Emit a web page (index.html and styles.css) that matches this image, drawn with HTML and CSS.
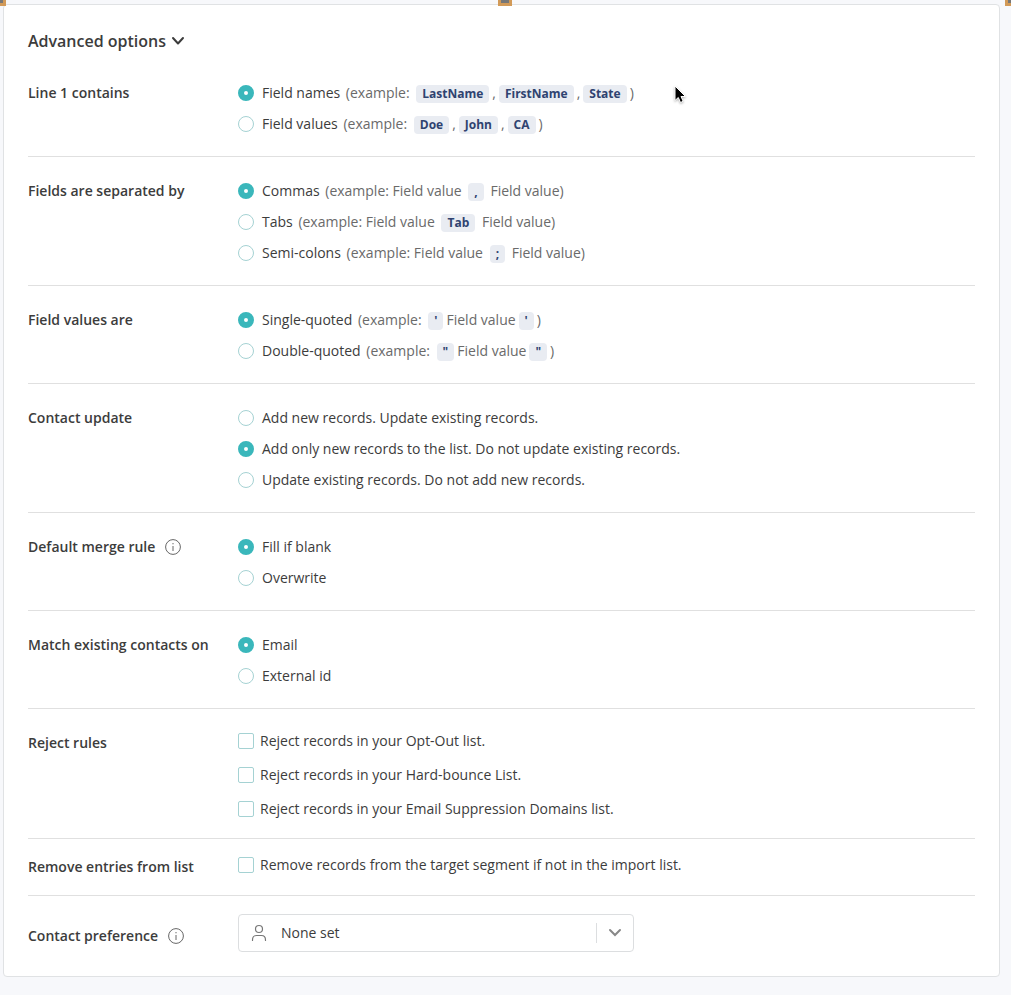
FILE: index.html
```html
<!DOCTYPE html>
<html lang="en">
<head>
  <meta charset="UTF-8">
  <meta name="viewport" content="width=device-width, initial-scale=1">
  <title>Import - Advanced options</title>
  <link rel="stylesheet" href="styles.css">
</head>
<body>

  <!-- Selection handles -->
  <span class="handle handle-left"></span>
  <span class="handle handle-center"></span>
  <span class="handle handle-right"></span>

  <form class="card">
    <button type="button" class="toggle" aria-expanded="true">
      Advanced options
      <svg width="14" height="10" viewBox="0 0 14 10" fill="none" stroke="#3c3c3c" stroke-width="2" stroke-linecap="round" stroke-linejoin="round"><path d="M2 2l5 5.500 5-5.500"/></svg>
    </button>

    <div class="row" role="radiogroup" aria-labelledby="lineTitle">
      <div class="title" id="lineTitle">Line 1 contains</div>
      <div class="options">
        <label class="option"><input type="radio" name="line" checked><span>Field names <span class="example">(example: <b class="chip">LastName</b>,<b class="chip">FirstName</b>,<b class="chip">State</b>)</span></span></label>
        <label class="option"><input type="radio" name="line"><span>Field values <span class="example">(example: <b class="chip">Doe</b>,<b class="chip">John</b>,<b class="chip">CA</b>)</span></span></label>
      </div>
    </div>

    <div class="row" role="radiogroup" aria-labelledby="separatorTitle">
      <div class="title" id="separatorTitle">Fields are separated by</div>
      <div class="options">
        <label class="option"><input type="radio" name="separator" checked><span>Commas <span class="example">(example: Field value <b class="chip">,</b> Field value)</span></span></label>
        <label class="option"><input type="radio" name="separator"><span>Tabs <span class="example">(example: Field value <b class="chip">Tab</b> Field value)</span></span></label>
        <label class="option"><input type="radio" name="separator"><span>Semi-colons <span class="example">(example: Field value <b class="chip">;</b> Field value)</span></span></label>
      </div>
    </div>

    <div class="row" role="radiogroup" aria-labelledby="quoteTitle">
      <div class="title" id="quoteTitle">Field values are</div>
      <div class="options">
        <label class="option"><input type="radio" name="quote" checked><span>Single-quoted <span class="example">(example: <b class="chip">'</b>Field value<b class="chip">'</b>)</span></span></label>
        <label class="option"><input type="radio" name="quote"><span>Double-quoted <span class="example">(example: <b class="chip">"</b>Field value<b class="chip">"</b>)</span></span></label>
      </div>
    </div>

    <div class="row" role="radiogroup" aria-labelledby="updateTitle">
      <div class="title" id="updateTitle">Contact update</div>
      <div class="options">
        <label class="option"><input type="radio" name="update"><span>Add new records. Update existing records.</span></label>
        <label class="option"><input type="radio" name="update" checked><span>Add only new records to the list. Do not update existing records.</span></label>
        <label class="option"><input type="radio" name="update"><span>Update existing records. Do not add new records.</span></label>
      </div>
    </div>

    <div class="row" role="radiogroup" aria-labelledby="mergeTitle">
      <div class="title" id="mergeTitle">
        Default merge rule
        <svg class="info" width="16" height="16" viewBox="0 0 16 16" fill="none" stroke="#666" stroke-width="1"><circle cx="8" cy="8" r="7.400"/><path d="M8 7v5M8 4v1.300"/></svg>
      </div>
      <div class="options">
        <label class="option"><input type="radio" name="merge" checked><span>Fill if blank</span></label>
        <label class="option"><input type="radio" name="merge"><span>Overwrite</span></label>
      </div>
    </div>

    <div class="row" role="radiogroup" aria-labelledby="matchTitle">
      <div class="title" id="matchTitle">Match existing contacts on</div>
      <div class="options">
        <label class="option"><input type="radio" name="match" checked><span>Email</span></label>
        <label class="option"><input type="radio" name="match"><span>External id</span></label>
      </div>
    </div>

    <div class="row row-checks" role="group" aria-labelledby="rejectTitle">
      <div class="title" id="rejectTitle">Reject rules</div>
      <div class="options">
        <label class="option check"><input type="checkbox"><span>Reject records in your Opt-Out list.</span></label>
        <label class="option check"><input type="checkbox"><span>Reject records in your Hard-bounce List.</span></label>
        <label class="option check"><input type="checkbox"><span>Reject records in your Email Suppression Domains list.</span></label>
      </div>
    </div>

    <div class="row row-remove" role="group" aria-labelledby="removeTitle">
      <div class="title" id="removeTitle">Remove entries from list</div>
      <div class="options">
        <label class="option check"><input type="checkbox"><span>Remove records from the target segment if not in the import list.</span></label>
      </div>
    </div>

    <div class="row row-preference">
      <label class="title" for="preference">
        Contact preference
        <svg class="info" width="16" height="16" viewBox="0 0 16 16" fill="none" stroke="#666" stroke-width="1"><circle cx="8" cy="8" r="7.400"/><path d="M8 7v5M8 4v1.300"/></svg>
      </label>
      <div class="select">
        <svg class="person" width="16" height="18" viewBox="0 0 16 18" fill="none" stroke="#777" stroke-width="1.200" stroke-linecap="round"><circle cx="8" cy="5" r="3.500"/><path d="M1.500 16.500v-.500c0-3 1.500-4.500 4-4.500h5c2.500 0 4 1.500 4 4.500v.500"/></svg>
        <select id="preference">
          <option>None set</option>
        </select>
        <span class="arrow"><svg width="14" height="10" viewBox="0 0 14 10" fill="none" stroke="#888" stroke-width="2" stroke-linecap="round"><path d="M2 2l5 5 5-5"/></svg></span>
      </div>
    </div>
  </form>

  <!-- Mouse pointer -->
  <svg class="pointer" width="14" height="20" viewBox="0 0 14 20"><path d="M2 1v14.500l3.300-3 2.200 5 2.700-1.200-2.200-4.800h4.500z" fill="#000" stroke="#fff" stroke-width="1"/></svg>

</body>
</html>
```
FILE: styles.css
```css
* {
  box-sizing: border-box;
}

body {
  margin: 0;
  padding: 4px 11px 18px 3px;
  min-height: 100vh;
  position: relative;
  overflow-x: hidden;
  background: #f7f8fb;
  color: #3c3c3c;
  font-family: "Open Sans", "Noto Sans", sans-serif;
  font-size: 14px;
  line-height: 20px;
}

.card {
  padding: 24px;
  background: #fff;
  border: 1px solid #e0e2e4;
  border-radius: 4px;
}

.toggle {
  display: flex;
  align-items: center;
  gap: 5px;
  padding: 0;
  margin-bottom: 6px;
  border: none;
  background: none;
  color: inherit;
  font: 600 16px/24px "Open Sans", "Noto Sans", sans-serif;
  cursor: pointer;
}

.row {
  display: grid;
  grid-template-columns: 210px 1fr;
  padding: 18px 0 17px;
  border-bottom: 1px solid #e0e0e0;
}

.title {
  display: flex;
  align-items: center;
  align-self: start;
  gap: 10px;
  height: 31px;
  font-weight: 600;
}

.option {
  display: flex;
  align-items: center;
  gap: 8px;
  min-height: 31px;
}

.option input {
  appearance: none;
  flex: none;
  width: 16px;
  height: 16px;
  margin: 0;
  border: 1px solid #a5d2d3;
  border-radius: 50%;
  background: #fff;
}

.option input[type="radio"]:checked {
  border: 6px solid #3ab7bb;
}

.example {
  margin-left: 2px;
  color: #6a6a6a;
}

.chip {
  display: inline-block;
  margin: 0 3px;
  padding: 0 6px;
  border-radius: 4px;
  background: #e9ecf2;
  color: #2f4370;
  font-size: 12px;
  line-height: 18px;
}

.check {
  gap: 6px;
  min-height: 34px;
}

.option input[type="checkbox"] {
  border-radius: 2px;
}

.option input[type="checkbox"]:checked {
  background: #3ab7bb;
}

.row-checks {
  padding: 15px 0 12px;
}

.row-checks .title {
  height: 38px;
}

.row-remove {
  padding: 9px 0;
}

.row-remove .title {
  height: 38px;
}

.row-preference {
  padding: 18px 0 0;
  border-bottom: none;
}

.row-preference .title {
  height: 44px;
  margin-bottom: -6px;
}

.select {
  position: relative;
  width: 100%;
  max-width: 396px;
  height: 38px;
}

.select select {
  appearance: none;
  width: 100%;
  height: 38px;
  padding: 0 48px 0 42px;
  border: 1px solid #dcdee0;
  border-radius: 4px;
  background: #fff;
  color: inherit;
  font: inherit;
}

/* icons lie over the select */
.person {
  position: absolute;
  left: 13px;
  top: 10px;
}

.arrow {
  position: absolute;
  right: 0;
  top: 9px;
  display: flex;
  align-items: center;
  justify-content: center;
  width: 38px;
  height: 20px;
  padding-right: 2px;
  border-left: 1px solid #dcdee0;
  pointer-events: none;
}

.handle {
  position: absolute;
  top: -8px;
  width: 14px;
  height: 14px;
  border: 3px solid #d29a58;
  background: #777;
}

.handle-left {
  left: -8px;
}

.handle-center {
  left: 498px;
}

.handle-right {
  right: -8px;
}

.pointer {
  position: absolute;
  left: 673px;
  top: 85px;
  filter: drop-shadow(0 1px 1px rgba(0, 0, 0, 0.3));
}
```
